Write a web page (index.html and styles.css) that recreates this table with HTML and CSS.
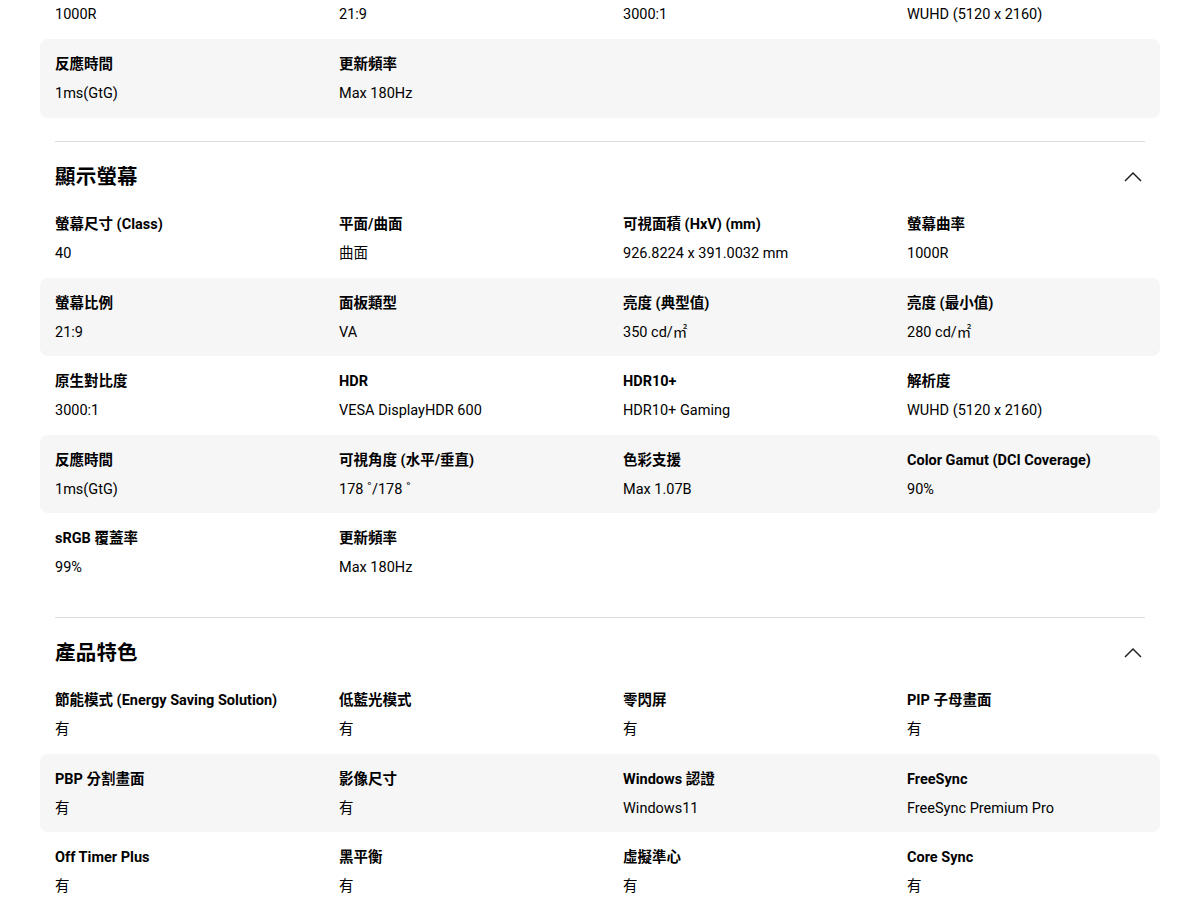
FILE: index.html
```html
<!DOCTYPE html>
<html lang="zh-Hant">
<head>
<meta charset="utf-8">
<title>規格</title>
<link rel="stylesheet" href="styles.css">
</head>
<body>
<div class="page">
  <section class="section first">
    <div class="rows">
      <div class="row partial">
        <div class="cell"><div class="value">1000R</div></div>
        <div class="cell"><div class="value">21:9</div></div>
        <div class="cell"><div class="value">3000:1</div></div>
        <div class="cell"><div class="value">WUHD (5120 x 2160)</div></div>
      </div>
      <div class="row grey">
        <div class="cell"><div class="label">反應時間</div><div class="value">1ms(GtG)</div></div>
        <div class="cell"><div class="label">更新頻率</div><div class="value">Max 180Hz</div></div>
      </div>
    </div>
  </section>

  <section class="section">
    <div class="divider"></div>
    <div class="head">
      <h2 class="title">顯示螢幕</h2>
      <svg class="chev" width="18" height="11" viewBox="0 0 18 11"><polyline points="1,10 9,2 17,10" fill="none" stroke="#222" stroke-width="1.5"/></svg>
    </div>
    <div class="rows">
      <div class="row">
        <div class="cell"><div class="label">螢幕尺寸 (Class)</div><div class="value">40</div></div>
        <div class="cell"><div class="label">平面/曲面</div><div class="value">曲面</div></div>
        <div class="cell"><div class="label">可視面積 (HxV) (mm)</div><div class="value">926.8224 x 391.0032 mm</div></div>
        <div class="cell"><div class="label">螢幕曲率</div><div class="value">1000R</div></div>
      </div>
      <div class="row grey">
        <div class="cell"><div class="label">螢幕比例</div><div class="value">21:9</div></div>
        <div class="cell"><div class="label">面板類型</div><div class="value">VA</div></div>
        <div class="cell"><div class="label">亮度 (典型值)</div><div class="value">350 cd/㎡</div></div>
        <div class="cell"><div class="label">亮度 (最小值)</div><div class="value">280 cd/㎡</div></div>
      </div>
      <div class="row">
        <div class="cell"><div class="label">原生對比度</div><div class="value">3000:1</div></div>
        <div class="cell"><div class="label">HDR</div><div class="value">VESA DisplayHDR 600</div></div>
        <div class="cell"><div class="label">HDR10+</div><div class="value">HDR10+ Gaming</div></div>
        <div class="cell"><div class="label">解析度</div><div class="value">WUHD (5120 x 2160)</div></div>
      </div>
      <div class="row grey">
        <div class="cell"><div class="label">反應時間</div><div class="value">1ms(GtG)</div></div>
        <div class="cell"><div class="label">可視角度 (水平/垂直)</div><div class="value">178 ˚/178 ˚</div></div>
        <div class="cell"><div class="label">色彩支援</div><div class="value">Max 1.07B</div></div>
        <div class="cell"><div class="label">Color Gamut (DCI Coverage)</div><div class="value">90%</div></div>
      </div>
      <div class="row">
        <div class="cell"><div class="label">sRGB 覆蓋率</div><div class="value">99%</div></div>
        <div class="cell"><div class="label">更新頻率</div><div class="value">Max 180Hz</div></div>
      </div>
    </div>
  </section>

  <section class="section">
    <div class="divider"></div>
    <div class="head">
      <h2 class="title">產品特色</h2>
      <svg class="chev" width="18" height="11" viewBox="0 0 18 11"><polyline points="1,10 9,2 17,10" fill="none" stroke="#222" stroke-width="1.5"/></svg>
    </div>
    <div class="rows">
      <div class="row">
        <div class="cell"><div class="label">節能模式 (Energy Saving Solution)</div><div class="value">有</div></div>
        <div class="cell"><div class="label">低藍光模式</div><div class="value">有</div></div>
        <div class="cell"><div class="label">零閃屏</div><div class="value">有</div></div>
        <div class="cell"><div class="label">PIP 子母畫面</div><div class="value">有</div></div>
      </div>
      <div class="row grey">
        <div class="cell"><div class="label">PBP 分割畫面</div><div class="value">有</div></div>
        <div class="cell"><div class="label">影像尺寸</div><div class="value">有</div></div>
        <div class="cell"><div class="label">Windows 認證</div><div class="value">Windows11</div></div>
        <div class="cell"><div class="label">FreeSync</div><div class="value">FreeSync Premium Pro</div></div>
      </div>
      <div class="row">
        <div class="cell"><div class="label">Off Timer Plus</div><div class="value">有</div></div>
        <div class="cell"><div class="label">黑平衡</div><div class="value">有</div></div>
        <div class="cell"><div class="label">虛擬準心</div><div class="value">有</div></div>
        <div class="cell"><div class="label">Core Sync</div><div class="value">有</div></div>
      </div>
    </div>
  </section>
</div>
</body>
</html>
```

FILE: styles.css
```css
* { box-sizing: border-box; }
html, body { margin: 0; padding: 0; background: #fff; }
body {
  font-family: Roboto, "Noto Sans CJK TC", "Noto Sans", sans-serif;
  color: #000;
  overflow: hidden;
}
.page {
  width: 1200px;
  padding: 0 40px;
}
.section { display: flex; flex-direction: column; }
.divider {
  height: 1px;
  flex: none;
  background: #dddddd;
  margin: 0 15px;
}
.head {
  display: flex;
  justify-content: space-between;
  align-items: center;
  padding: 21px 15px 8px 15px;
  height: 57px;
  flex: none;
}
.title {
  margin: 0;
  font-size: 20.5px;
  line-height: 28px;
  font-weight: 700;
  letter-spacing: 0.2px;
}
.chev { margin-right: 3px; margin-top: -1px; }
.rows { display: flex; flex-direction: column; padding-bottom: 25.5px; }
.section.first .rows { padding-bottom: 23.5px; }
.row {
  display: grid;
  grid-template-columns: 284px 284px 284px 1fr;
  align-items: start;
  height: 78.5px;
  flex: none;
  padding: 16px 15px 0 15px;
  border-radius: 8px;
}
.row.partial { height: 39px; padding-top: 5px; }
.row.grey { background: #f6f6f6; }
.cell { display: flex; flex-direction: column; gap: 9px; }
.label {
  font-size: 14.5px;
  line-height: 20px;
  font-weight: 700;
  white-space: nowrap;
}
.value {
  font-size: 14.5px;
  line-height: 20px;
  font-weight: 400;
  white-space: nowrap;
}
```
